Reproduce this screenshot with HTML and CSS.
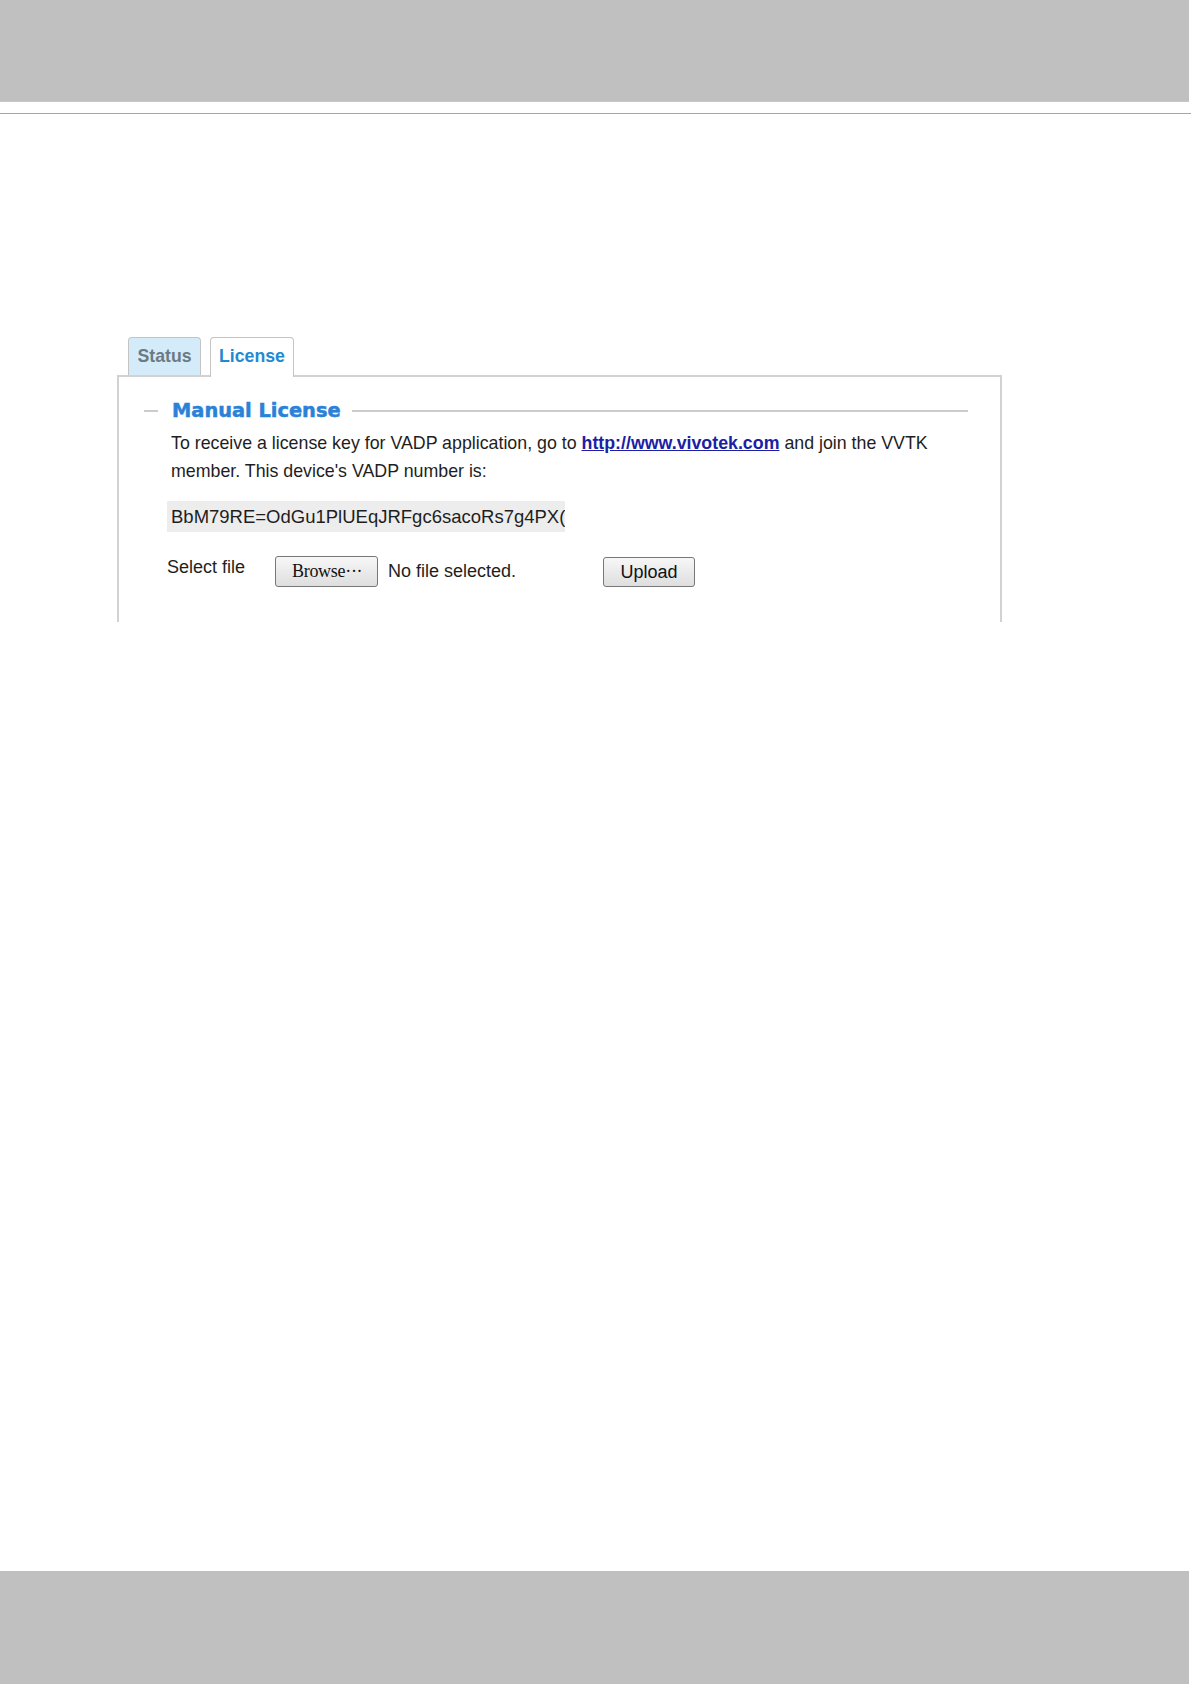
FILE: index.html
```html
<!DOCTYPE html>
<html lang="en">
<head>
<meta charset="utf-8">
<title>License</title>
<link rel="stylesheet" href="styles.css">
</head>
<body>
<div class="page">
  <header class="topbar"></header>
  <div class="rule"></div>
  <main class="content">
    <nav class="tabs">
      <div class="tab tab-status">Status</div>
      <div class="tab tab-license">License</div>
    </nav>
    <section class="panel">
      <div class="legend">
        <span class="legend-dash"></span>
        <h2 class="legend-title">Manual License</h2>
        <span class="legend-line"></span>
      </div>
      <p class="desc">To receive a license key for VADP application, go to <a class="link" href="#">http://www.vivotek.com</a> and join the VVTK member. This device's VADP number is:</p>
      <div class="code-field">BbM79RE=OdGu1PlUEqJRFgc6sacoRs7g4PX(Zq</div>
      <div class="file-row">
        <span class="file-label">Select file</span>
        <span class="btn btn-browse">Browse···</span>
        <span class="file-status">No file selected.</span>
        <span class="btn btn-upload">Upload</span>
      </div>
    </section>
  </main>
  <footer class="bottombar"></footer>
</div>
</body>
</html>
```
FILE: styles.css
```css
html, body {
  margin: 0;
  padding: 0;
  background: #ffffff;
}

.page {
  width: 1191px;
  min-height: 1684px;
  display: flex;
  flex-direction: column;
  font-family: "Liberation Sans", Arial, sans-serif;
  color: #1e1e1e;
}

.topbar {
  width: 1189px;
  height: 102px;
  background: #c0c0c0;
  box-shadow: inset 0 -1px 0 #c8c8c8;
}

.rule {
  margin-top: 11px;
  height: 1px;
  width: 1191px;
  background: #a6a6a6;
}

.content {
  margin-top: 223px;
  display: flex;
  flex-direction: column;
}

.tabs {
  display: flex;
  gap: 9px;
  margin-left: 128px;
  align-items: flex-end;
}

.tab {
  box-sizing: border-box;
  height: 38px;
  line-height: 37px;
  border: 1px solid #c4c4c4;
  border-bottom: none;
  border-radius: 4px 4px 0 0;
  font-weight: bold;
  font-size: 17.7px;
  text-align: center;
}

.tab-status {
  width: 73px;
  background: #d4ecf9;
  color: #6c7a83;
}

.tab-license {
  position: relative;
  z-index: 1;
  width: 84px;
  height: 40px;
  margin-bottom: -2px;
  padding-bottom: 2px;
  background: #ffffff;
  color: #1f8ad2;
}

.panel {
  box-sizing: border-box;
  margin-left: 117px;
  width: 885px;
  height: 247px;
  border: 2px solid #d2d2d2;
  border-bottom: none;
  padding-top: 24px;
}

.legend {
  display: flex;
  align-items: center;
  height: 20px;
  padding-left: 25px;
  padding-right: 32px;
}

.legend-dash {
  width: 14px;
  height: 2px;
  background: #cccccc;
}

.legend-title {
  margin: 0 0 0 14px;
  font-family: "DejaVu Sans", Verdana, sans-serif;
  font-weight: bold;
  font-size: 19.4px;
  line-height: 20px;
  color: #2a82d8;
  -webkit-text-stroke: 0.5px #2a82d8;
  white-space: nowrap;
}

.legend-line {
  flex: 1;
  height: 2px;
  margin-left: 11px;
  background: #cccccc;
}

.desc {
  margin: 8px 0 0 52px;
  width: 800px;
  font-size: 17.8px;
  line-height: 28px;
  color: #1e1e1e;
}

.link {
  color: #1c20a4;
  font-weight: bold;
  text-decoration: underline;
}

.code-field {
  box-sizing: border-box;
  margin: 16px 0 0 48px;
  width: 398px;
  height: 31px;
  line-height: 31px;
  padding-left: 4px;
  background: #ededed;
  font-size: 18.5px;
  color: #1e1e1e;
  white-space: nowrap;
  overflow: hidden;
}

.file-row {
  display: flex;
  align-items: center;
  margin: 24px 0 0 48px;
  height: 31px;
  font-size: 18px;
}

.file-label {
  width: 108px;
  line-height: 21px;
  align-self: flex-start;
  margin-top: 1px;
}

.btn {
  box-sizing: border-box;
  display: flex;
  align-items: center;
  justify-content: center;
  border: 1px solid #777777;
  border-radius: 3px;
  background: linear-gradient(#f7f7f7, #dedede);
  color: #111111;
}

.btn-browse {
  width: 103px;
  height: 31px;
  justify-content: flex-start;
  padding-left: 16px;
  font-family: "Liberation Serif", "Times New Roman", serif;
  font-size: 18px;
  letter-spacing: -0.3px;
}

.file-status {
  box-sizing: border-box;
  width: 225px;
  padding-left: 10px;
}

.btn-upload {
  width: 92px;
  height: 30px;
  font-size: 18px;
  margin-top: 1px;
}

.bottombar {
  margin-top: auto;
  width: 1189px;
  height: 113px;
  background: #c0c0c0;
}
```
